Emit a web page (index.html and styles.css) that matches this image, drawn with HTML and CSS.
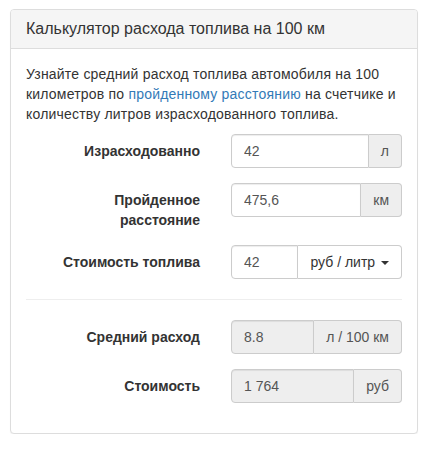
FILE: index.html
```
<!DOCTYPE html>
<html lang="ru">
<head>
<meta charset="utf-8">
<title>Калькулятор расхода топлива</title>
<link rel="stylesheet" href="styles.css">
</head>
<body>
<div class="panel">
  <div class="panel-heading">Калькулятор расхода топлива на 100 км</div>
  <div class="panel-body">
    <p class="intro">Узнайте средний расход топлива автомобиля на 100 километров по <a href="#">пройденному расстоянию</a> на счетчике и количеству литров израсходованного топлива.</p>
    <form class="form">
      <div class="form-group">
        <label class="control-label">Израсходованно</label>
        <div class="input-group">
          <input class="form-control" type="text" value="42">
          <span class="addon">л</span>
        </div>
      </div>
      <div class="form-group">
        <label class="control-label">Пройденное расстояние</label>
        <div class="input-group">
          <input class="form-control" type="text" value="475,6">
          <span class="addon">км</span>
        </div>
      </div>
      <div class="form-group">
        <label class="control-label">Стоимость топлива</label>
        <div class="input-group">
          <input class="form-control" type="text" value="42">
          <button class="btn" type="button">руб / литр <span class="caret"></span></button>
        </div>
      </div>
      <hr class="divider">
      <div class="form-group">
        <label class="control-label">Средний расход</label>
        <div class="input-group">
          <input class="form-control readonly" type="text" value="8.8" readonly>
          <span class="addon">л / 100 км</span>
        </div>
      </div>
      <div class="form-group">
        <label class="control-label">Стоимость</label>
        <div class="input-group">
          <input class="form-control readonly" type="text" value="1 764" readonly>
          <span class="addon">руб</span>
        </div>
      </div>
    </form>
  </div>
</div>
</body>
</html>
```
FILE: styles.css
```
* { box-sizing: border-box; }
html, body { margin: 0; padding: 0; background: #fff; }
body {
  font-family: "Liberation Sans", Arial, sans-serif;
  font-size: 14px;
  line-height: 20px;
  color: #333;
}
.panel {
  margin: 9px 0 0 10px;
  width: 408px;
  border: 1px solid #ddd;
  border-radius: 4px;
  box-shadow: 0 1px 1px rgba(0,0,0,0.05);
  background: #fff;
}
.panel-heading {
  background: #f5f5f5;
  border-bottom: 1px solid #ddd;
  border-radius: 3px 3px 0 0;
  padding: 10px 15px;
  font-size: 16px;
  line-height: 17.6px;
  color: #333;
}
.panel-body { padding: 15px; }
.intro { margin: 0 0 10px; letter-spacing: 0.2px; }
.intro a { color: #337ab7; text-decoration: none; }
.form { margin: 0; }
.form-group {
  display: grid;
  grid-template-columns: 174px 1fr;
  column-gap: 31px;
  margin-bottom: 15px;
  align-items: start;
}
.control-label {
  padding-top: 7px;
  padding-left: 12px;
  font-weight: bold;
  text-align: right;
}
.input-group { display: flex; height: 34px; }
.form-control {
  flex: 1 1 auto;
  min-width: 0;
  width: 100%;
  height: 34px;
  padding: 6px 12px;
  font: inherit;
  font-size: 14px;
  line-height: 20px;
  color: #555;
  background: #fff;
  border: 1px solid #ccc;
  border-radius: 4px 0 0 4px;
  box-shadow: inset 0 1px 1px rgba(0,0,0,0.075);
  outline: none;
}
.form-control.readonly { background: #eee; }
.addon {
  flex: 0 0 auto;
  padding: 6px 12px;
  font-size: 14px;
  line-height: 20px;
  color: #555;
  background: #eee;
  border: 1px solid #ccc;
  border-left: 0;
  border-radius: 0 4px 4px 0;
  white-space: nowrap;
}
.btn {
  flex: 0 0 103px;
  padding: 6px 12px;
  font: inherit;
  font-size: 14px;
  line-height: 20px;
  color: #333;
  background: #fff;
  border: 1px solid #ccc;
  border-left: 0;
  border-radius: 0 4px 4px 0;
  white-space: nowrap;
  cursor: pointer;
}
.caret {
  display: inline-block;
  width: 0;
  height: 0;
  margin-left: 2px;
  vertical-align: middle;
  border-top: 4px solid #333;
  border-left: 4px solid transparent;
  border-right: 4px solid transparent;
}
.divider {
  margin: 20px 0;
  border: 0;
  border-top: 1px solid #eee;
  height: 0;
}
```
